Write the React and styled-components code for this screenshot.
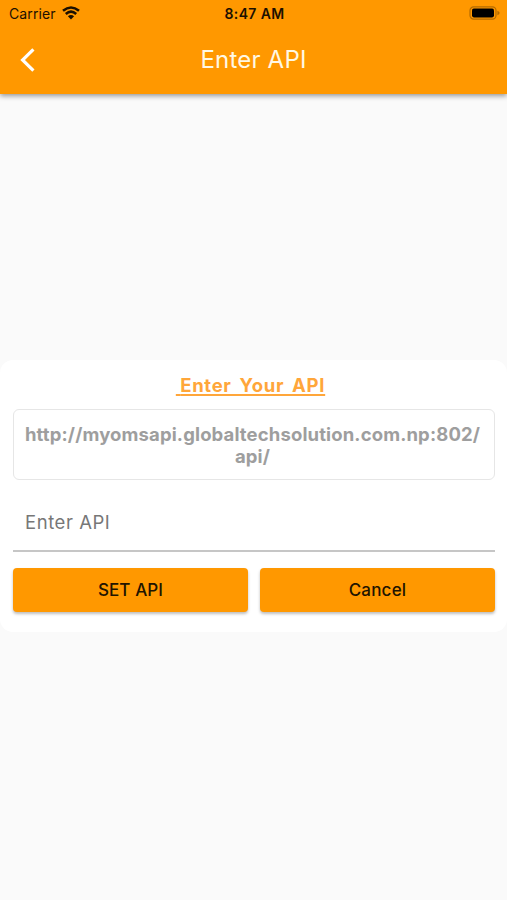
import React from 'react'
import styled, { createGlobalStyle } from 'styled-components'

const GlobalStyle = createGlobalStyle`
    * {
        box-sizing: border-box;
    }

    body {
        margin: 0;
        background: #fafafa;
        font-family: Inter, "Liberation Sans", sans-serif;
    }
`

const Screen = styled.div`
    display: flex;
    flex-direction: column;
    height: 900px;
    background: #fafafa;
`

const Header = styled.header`
    height: 94px;
    background: #ff9800;
    box-shadow: 0 2px 5px rgba(0, 0, 0, 0.4);
`

const StatusBar = styled.div`
    display: grid;
    grid-template-columns: 1fr auto 1fr;
    align-items: center;
    height: 27px;
    padding: 0 7px 0 9px;
    color: #1c1000;
    font-size: 14px;
    line-height: 27px;
`

const Carrier = styled.div`
    display: flex;
    align-items: center;
    gap: 6px;
    letter-spacing: 0.1px;

    svg {
        margin-bottom: 2px;
    }
`

const Clock = styled.span`
    font-weight: 600;
    letter-spacing: 0.35px;
`

const BatterySlot = styled.div`
    display: flex;
    justify-content: flex-end;
    padding-bottom: 1px;
`

const NavBar = styled.div`
    display: grid;
    grid-template-columns: 56px 1fr 56px;
    align-items: center;
    height: 65px;
`

const BackButton = styled.button`
    display: flex;
    align-items: center;
    height: 56px;
    padding: 0 0 0 20px;
    border: 0;
    background: none;
    color: #fff;
`

const Title = styled.h1`
    margin: 0;
    color: #fff8e4;
    font-size: 24px;
    font-weight: 400;
    letter-spacing: 0.2px;
    line-height: 28px;
    text-align: center;
`

const Card = styled.main`
    display: flex;
    flex-direction: column;
    margin-top: 266px;
    height: 272px;
    padding: 14px 12px 0 13px;
    border-radius: 13px;
    background: #fff;
`

const CardTitle = styled.h2`
    margin: 0 0 12px;
    padding-right: 7px;
    color: #ffa63a;
    font-size: 18.5px;
    font-weight: 700;
    letter-spacing: 0.7px;
    word-spacing: 2.8px;
    line-height: 23px;
    text-align: center;
    text-decoration: underline;
    text-decoration-thickness: 1.5px;
    text-underline-offset: 2px;
    white-space: pre;
`

const Lead = styled.span`
    word-spacing: 0;
    letter-spacing: 0;
`

const CurrentApi = styled.div`
    height: 71px;
    padding: 13px 10px 0 7px;
    border: 1.5px solid #e6e6e6;
    border-radius: 6px;
    color: #9e9e9e;
    font-size: 18.5px;
    font-weight: 700;
    letter-spacing: 0.13px;
    line-height: 22px;
    text-align: center;
    white-space: nowrap;
`

const ApiInput = styled.input`
    height: 72px;
    padding: 13px 12px 0;
    border: 0;
    border-bottom: 2px solid #c6c6c6;
    background: none;
    outline: none;
    font-family: inherit;
    font-size: 18.5px;
    letter-spacing: 0.55px;

    &::placeholder {
        color: #777;
        opacity: 1;
    }
`

const Actions = styled.div`
    display: grid;
    grid-template-columns: 1fr 1fr;
    gap: 12px;
    margin-top: 16px;
`

const ActionButton = styled.button`
    height: 44px;
    padding: 0;
    border: 0;
    border-radius: 4px;
    background: #ff9800;
    box-shadow: 0 2px 3px rgba(0, 0, 0, 0.26);
    color: #211400;
    font-family: inherit;
    font-size: 17px;
    font-weight: 500;
    letter-spacing: ${props => props.$spacing || '0.1px'};
`

const WifiIcon = () => (
    <svg width="18" height="14" viewBox="0 0 18 14" fill="none" stroke="#1c1000" strokeWidth="2.6">
        <path d="M1 4.8Q9 -1.8 17 4.8" />
        <path d="M3.8 7.9Q9 3.4 14.2 7.9" />
        <path d="M9 13.4L5.9 10.2Q9 7.7 12.1 10.2Z" fill="#1c1000" stroke="none" />
    </svg>
)

const BatteryIcon = () => (
    <svg width="31" height="14" viewBox="0 0 31 14">
        <rect x="1" y="0.9" width="26" height="12.2" rx="3.6" fill="none" stroke="#b46b00" strokeWidth="1.2" />
        <rect x="3" y="2.6" width="22" height="8.8" rx="1.8" fill="#000" />
        <path d="M28.4 4.8Q30.6 5.5 30.6 7Q30.6 8.5 28.4 9.2Z" fill="#b46b00" />
    </svg>
)

const BackIcon = () => (
    <svg width="16" height="26" viewBox="0 0 16 26" fill="none" stroke="currentColor" strokeWidth="3.2">
        <path d="M13.4 2.4L2.6 13L13.4 23.6" />
    </svg>
)

const App = () => (
    <>
        <GlobalStyle />
        <Screen>
            <Header>
                <StatusBar>
                    <Carrier>Carrier <WifiIcon /></Carrier>
                    <Clock>8:47 AM</Clock>
                    <BatterySlot><BatteryIcon /></BatterySlot>
                </StatusBar>
                <NavBar>
                    <BackButton aria-label="Back"><BackIcon /></BackButton>
                    <Title>Enter API</Title>
                </NavBar>
            </Header>
            <Card>
                <CardTitle><Lead>{' '}</Lead>Enter Your API</CardTitle>
                <CurrentApi>http://myomsapi.globaltechsolution.com.np:802/<br />api/</CurrentApi>
                <ApiInput placeholder="Enter API" />
                <Actions>
                    <ActionButton>SET API</ActionButton>
                    <ActionButton $spacing="0.2px">Cancel</ActionButton>
                </Actions>
            </Card>
        </Screen>
    </>
)

export default App
